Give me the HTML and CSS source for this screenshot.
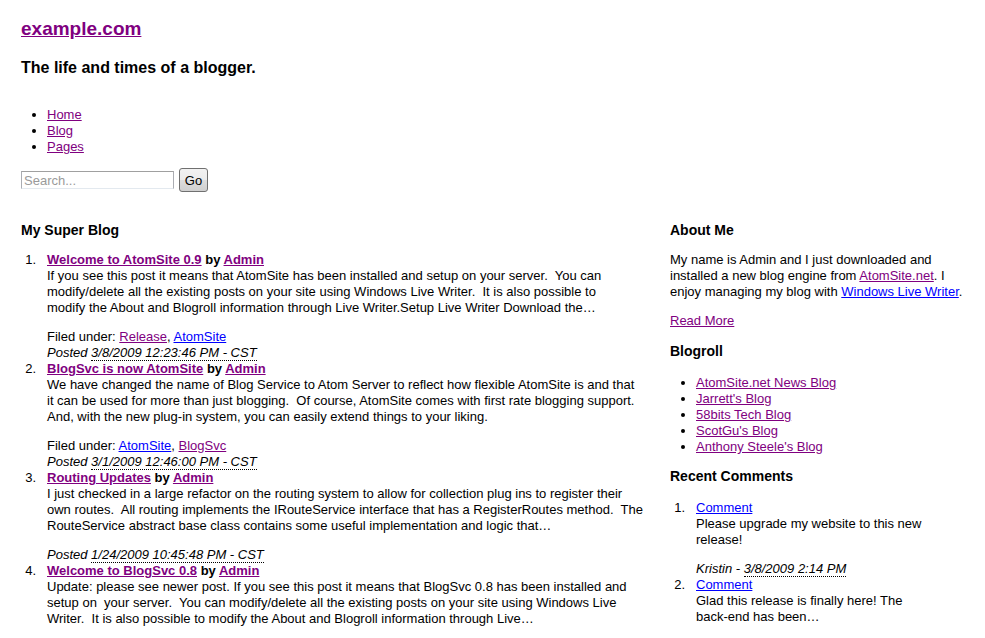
FILE: index.html
```html
<!DOCTYPE html>
<html>
<head>
<meta charset="utf-8">
<title>example.com</title>
<link rel="stylesheet" href="styles.css">
</head>
<body>
<div class="page">
  <header class="site-header">
    <h1 class="site-title"><a class="visited" href="#">example.com</a></h1>
    <h2 class="site-tagline">The life and times of a blogger.</h2>
    <ul class="nav">
      <li><a class="visited" href="#">Home</a></li>
      <li><a class="visited" href="#">Blog</a></li>
      <li><a class="visited" href="#">Pages</a></li>
    </ul>
    <form class="search">
      <input class="search-input" type="text" placeholder="Search...">
      <button class="search-btn" type="button">Go</button>
    </form>
  </header>

  <div class="columns">
    <main class="main">
      <h3 class="section-title">My Super Blog</h3>
      <ol class="posts">
        <li>
          <div class="post-head"><a class="visited" href="#">Welcome to AtomSite 0.9</a> by <a class="visited" href="#">Admin</a></div>
          <p class="summary">If you see this post it means that AtomSite has been installed and setup on your server.&nbsp; You can<br>modify/delete all the existing posts on your site using Windows Live Writer.&nbsp; It is also possible to<br>modify the About and Blogroll information through Live Writer.Setup Live Writer Download the…</p>
          <div class="filed">Filed under: <a class="visited" href="#">Release</a>, <a class="fresh" href="#">AtomSite</a></div>
          <div class="posted">Posted <abbr class="date" title="2009-03-08">3/8/2009 12:23:46 PM - CST</abbr></div>
        </li>
        <li>
          <div class="post-head"><a class="visited" href="#">BlogSvc is now AtomSite</a> by <a class="visited" href="#">Admin</a></div>
          <p class="summary">We have changed the name of Blog Service to Atom Server to reflect how flexible AtomSite is and that<br>it can be used for more than just blogging.&nbsp; Of course, AtomSite comes with first rate blogging support.<br>And, with the new plug-in system, you can easily extend things to your liking.</p>
          <div class="filed">Filed under: <a class="fresh" href="#">AtomSite</a>, <a class="visited" href="#">BlogSvc</a></div>
          <div class="posted">Posted <abbr class="date" title="2009-03-01">3/1/2009 12:46:00 PM - CST</abbr></div>
        </li>
        <li>
          <div class="post-head"><a class="visited" href="#">Routing Updates</a> by <a class="visited" href="#">Admin</a></div>
          <p class="summary">I just checked in a large refactor on the routing system to allow for collection plug ins to register their<br>own routes.&nbsp; All routing implements the IRouteService interface that has a RegisterRoutes method.&nbsp; The<br>RouteService abstract base class contains some useful implementation and logic that…</p>
          <div class="posted">Posted <abbr class="date" title="2009-01-24">1/24/2009 10:45:48 PM - CST</abbr></div>
        </li>
        <li>
          <div class="post-head"><a class="visited" href="#">Welcome to BlogSvc 0.8</a> by <a class="visited" href="#">Admin</a></div>
          <p class="summary">Update: please see newer post. If you see this post it means that BlogSvc 0.8 has been installed and<br>setup on&nbsp; your server.&nbsp; You can modify/delete all the existing posts on your site using Windows Live<br>Writer.&nbsp; It is also possible to modify the About and Blogroll information through Live…</p>
          <div class="filed">Filed under: <a class="visited" href="#">Release</a>, <a class="visited" href="#">BlogSvc</a></div>
          <div class="posted">Posted <abbr class="date" title="2008-10-01">10/1/2008 9:12:00 PM - CST</abbr></div>
        </li>
      </ol>
    </main>

    <aside class="sidebar">
      <h3 class="section-title">About Me</h3>
      <p class="about">My name is Admin and I just downloaded and installed a new blog engine from <a class="visited" href="#">AtomSite.net</a>. I enjoy managing my blog with <a class="fresh" href="#">Windows Live Writer</a>.</p>
      <p class="more"><a class="visited" href="#">Read More</a></p>

      <h3 class="section-title">Blogroll</h3>
      <ul class="blogroll">
        <li><a class="visited" href="#">AtomSite.net News Blog</a></li>
        <li><a class="visited" href="#">Jarrett's Blog</a></li>
        <li><a class="visited" href="#">58bits Tech Blog</a></li>
        <li><a class="visited" href="#">ScotGu's Blog</a></li>
        <li><a class="visited" href="#">Anthony Steele's Blog</a></li>
      </ul>

      <h3 class="section-title">Recent Comments</h3>
      <ol class="comments">
        <li>
          <div><a class="fresh" href="#">Comment</a></div>
          <p class="summary">Please upgrade my website to this new release!</p>
          <div class="posted">Kristin - <abbr class="date" title="2009-03-08">3/8/2009 2:14 PM</abbr></div>
        </li>
        <li>
          <div><a class="fresh" href="#">Comment</a></div>
          <p class="summary">Glad this release is finally here! The<br>back-end has been…</p>
          <div class="posted">Jarrett - <abbr class="date" title="2009-03-07">3/7/2009 9:40 AM</abbr></div>
        </li>
      </ol>
    </aside>
  </div>
</div>
</body>
</html>
```

FILE: styles.css
```css
html, body {
  margin: 0;
  padding: 0;
  background: #ffffff;
}

body {
  font-family: "Liberation Sans", Arial, sans-serif;
  font-size: 13px;
  line-height: 16px;
  color: #000000;
}

a.visited { color: #800080; }
a.fresh { color: #0000ff; }

.page {
  padding: 18px 21px 40px 21px;
}

.site-title {
  margin: 0;
  font-size: 19px;
  line-height: 22px;
  font-weight: bold;
}

.site-tagline {
  margin: 18px 0 0 0;
  font-size: 16px;
  line-height: 20px;
  font-weight: bold;
}

.nav {
  margin: 29px 0 0 0;
  padding: 0 0 0 26px;
  list-style: disc;
}

.search {
  margin: 13px 0 0 0;
  display: flex;
  align-items: center;
  gap: 5px;
  height: 24px;
}

.search-input {
  box-sizing: border-box;
  width: 153px;
  height: 18px;
  margin: 0;
  padding: 0 2px;
  border: 1px solid #abadb3;
  border-top-color: #a0a0a0;
  border-bottom-color: #e3e9ef;
  font-family: "Liberation Sans", Arial, sans-serif;
  font-size: 13px;
  color: #000;
  background: #fff;
}

.search-input::placeholder {
  color: #9a9a9a;
}

.search-btn {
  box-sizing: border-box;
  width: 29px;
  height: 24px;
  margin: 0;
  padding: 0;
  border: 1px solid #707070;
  border-radius: 3px;
  background: linear-gradient(#f2f2f2 0%, #ebebeb 50%, #dddddd 51%, #cfcfcf 100%);
  font-family: "Liberation Sans", Arial, sans-serif;
  font-size: 13px;
  color: #000;
}

.columns {
  margin-top: 29px;
  display: grid;
  grid-template-columns: 625px 295px;
  column-gap: 24px;
  align-items: start;
}

.section-title {
  margin: 0;
  font-size: 14px;
  line-height: 18px;
  font-weight: bold;
}

.posts {
  margin: 13px 0 0 0;
  padding: 0 0 0 26px;
}

.comments {
  margin: 15px 0 0 0;
  padding: 0 0 0 26px;
}

.posts > li::marker,
.comments > li::marker {
  content: counter(list-item) ".\00a0\00a0\00a0";
}

.post-head {
  font-weight: bold;
}

.summary {
  margin: 0 0 13px 0;
}

.posted {
  font-style: italic;
}

.date {
  text-decoration: none;
  border-bottom: 1px dotted #000;
}

.about {
  margin: 13px 0 0 0;
}

.more {
  margin: 13px 0 13px 0;
}

.blogroll {
  margin: 15px 0 12px 0;
  padding: 0 0 0 26px;
  list-style: disc;
}
```
